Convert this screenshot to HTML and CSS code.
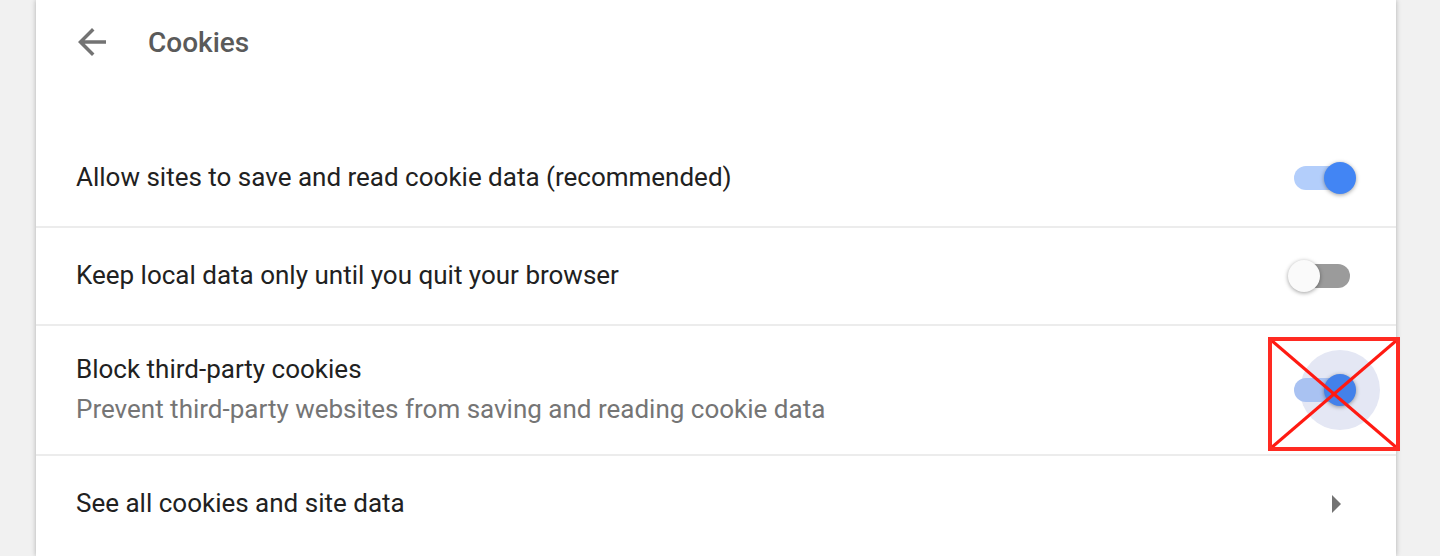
FILE: index.html
```html
<!DOCTYPE html>
<html lang="en">

<head>
    <meta charset="UTF-8">
    <title>Cookies</title>
    <link rel="stylesheet" href="styles.css">
</head>

<body>
    <section class="card">
        <header class="subpage-header">
            <svg class="back" viewBox="0 0 24 24" width="42" height="42">
                <path d="M20 11H7.83l5.59-5.59L12 4l-8 8 8 8 1.41-1.41L7.83 13H20v-2z"></path>
            </svg>
            <h1>Cookies</h1>
        </header>

        <div class="row">
            <div class="label">Allow sites to save and read cookie data (recommended)</div>
            <span class="toggle on"><span class="bar"></span><span class="knob"></span></span>
        </div>

        <div class="row">
            <div class="label">Keep local data only until you quit your browser</div>
            <span class="toggle"><span class="bar"></span><span class="knob"></span></span>
        </div>

        <div class="row two-line">
            <div class="label">
                <div>Block third-party cookies</div>
                <div class="sub">Prevent third-party websites from saving and reading cookie data</div>
            </div>
            <span class="toggle on focused">
                <span class="ripple"></span><span class="bar"></span><span class="knob"></span>
                <!--marca de anotacion-->
                <svg class="cross" width="132" height="114" viewBox="0 0 132 114">
                    <line x1="3" y1="3" x2="129" y2="111"></line>
                    <line x1="129" y1="3" x2="3" y2="111"></line>
                    <rect x="2" y="2" width="128" height="110"></rect>
                </svg>
            </span>
        </div>

        <div class="row">
            <div class="label">See all cookies and site data</div>
            <svg class="subpage-arrow" width="9" height="18" viewBox="0 0 9 18">
                <polygon points="0,0 9,9 0,18"></polygon>
            </svg>
        </div>
    </section>
</body>

</html>
```

FILE: styles.css
```css
body {
    margin: 0;
    background-color: #f1f1f1;
    font-family: Roboto, 'Liberation Sans', sans-serif;
    height: 556px;
    overflow: hidden;
}

.card {
    margin-left: 36px;
    width: 1360px;
    min-height: 556px;
    background-color: #fff;
    box-shadow: 0 0 5px rgba(0, 0, 0, 0.28);
}

.subpage-header {
    display: flex;
    align-items: center;
    height: 84px;
    padding-left: 35px;
    margin-bottom: 46px;

    .back {
        fill: #737373;
        flex: none;
    }

    h1 {
        margin: 0 0 0 35px;
        font-size: 28px;
        font-weight: 500;
        color: #5a5a5a;
    }
}

.row {
    display: flex;
    align-items: center;
    min-height: 94px;
    padding: 0 40px 2px;
    font-size: 26px;
    color: #212121;

    & + .row {
        border-top: 2px solid #ececec;
    }

    .label {
        flex: 1;
    }

    &.two-line {
        min-height: 126px;
        line-height: 40px;
    }

    .sub {
        color: #757575;
    }
}

.toggle {
    position: relative;
    flex: none;
    width: 68px;
    height: 32px;
    margin-top: 2px;

    .bar {
        position: absolute;
        left: 6px;
        top: 4px;
        width: 56px;
        height: 24px;
        border-radius: 12px;
        background-color: #9b9b9b;
    }

    .knob {
        position: absolute;
        top: 0;
        left: 0;
        width: 32px;
        height: 32px;
        border-radius: 50%;
        background-color: #fafafa;
        box-shadow: 0 1px 4px rgba(0, 0, 0, 0.38);
    }

    &.on {
        .bar {
            background-color: #b3cefb;
        }

        .knob {
            left: 36px;
            background-color: #4285f4;
        }
    }

    .ripple {
        position: absolute;
        left: 12px;
        top: -24px;
        width: 80px;
        height: 80px;
        border-radius: 50%;
        background-color: #e4e7f4;
    }

    &.focused .bar {
        background-color: #a9c2f2;
    }

    &.focused .knob {
        background-color: #4381ea;
    }
}

.cross {
    position: absolute;
    left: -20px;
    top: -37px;

    line {
        stroke: #ff1a12;
        stroke-width: 3;
    }

    rect {
        fill: none;
        stroke: #ff2a22;
        stroke-width: 4;
    }
}

.subpage-arrow {
    fill: #737373;
    margin: 2px 15px 0 0;
}
```
